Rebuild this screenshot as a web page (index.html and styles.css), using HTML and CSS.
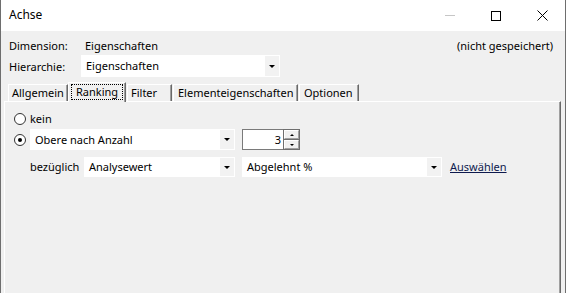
FILE: index.html
```html
<!DOCTYPE html>
<html lang="de">
<head>
<meta charset="utf-8">
<title>Achse</title>
<link rel="stylesheet" href="styles.css">
</head>
<body>
<div class="window">
  <div class="titlebar">
    <div class="title">Achse</div>
    <div class="tb-btn tb-min"><span class="min-line"></span></div>
    <div class="tb-btn"><span class="max-box"></span></div>
    <div class="tb-btn">
      <svg width="11" height="11" viewBox="0 0 11 11"><path d="M0.5 0.5 L10.5 10.5 M10.5 0.5 L0.5 10.5" stroke="#000" stroke-width="1" fill="none"/></svg>
    </div>
  </div>
  <div class="body">
    <div class="info-row">
      <span class="lbl">Dimension:</span>
      <span class="val">Eigenschaften</span>
      <span class="status">(nicht gespeichert)</span>
    </div>
    <div class="hier-row">
      <span class="lbl2">Hierarchie:</span>
      <div class="combo combo-hier"><span class="ctext">Eigenschaften</span><span class="carrow"><i class="tri-down"></i></span></div>
    </div>
    <div class="tabs">
      <div class="tab tab-allg">Allgemein</div>
      <div class="tab tab-active"><span class="focus">Ranking</span></div>
      <div class="tab tab-filter">Filter</div>
      <div class="tab tab-elem">Elementeigenschaften</div>
      <div class="tab tab-opt">Optionen</div>
    </div>
    <div class="panel">
      <div class="prow prow1">
        <span class="radio"></span><span class="rlabel">kein</span>
      </div>
      <div class="prow prow2">
        <span class="radio checked"><i class="dot"></i></span>
        <div class="combo combo-obere"><span class="ctext">Obere nach Anzahl</span><span class="carrow"><i class="tri-down"></i></span></div>
        <div class="spin">
          <span class="spin-val">3</span>
          <div class="spin-btns">
            <span class="sbtn"><i class="tri-up-s"></i></span>
            <span class="sbtn"><i class="tri-down-s"></i></span>
          </div>
        </div>
      </div>
      <div class="prow prow3">
        <span class="bez">bezüglich</span>
        <div class="combo combo-ana"><span class="ctext">Analysewert</span><span class="carrow"><i class="tri-down"></i></span></div>
        <div class="combo combo-abg"><span class="ctext">Abgelehnt %</span><span class="carrow"><i class="tri-down"></i></span></div>
        <a class="link" href="#">Auswählen</a>
      </div>
    </div>
  </div>
</div>
</body>
</html>
```

FILE: styles.css
```css
* { box-sizing: border-box; }
html, body { margin: 0; padding: 0; }
body {
  width: 566px;
  height: 293px;
  overflow: hidden;
  background: #f0f0f0;
  font-family: "Noto Sans", "Liberation Sans", sans-serif;
  font-size: 11px;
  color: #000;
}
.window {
  width: 566px;
  height: 293px;
  border-left: 1px solid #6e6e6e;
  border-right: 1px solid #6e6e6e;
  background: #f0f0f0;
  display: flex;
  flex-direction: column;
  overflow: hidden;
}
.titlebar {
  height: 31px;
  background: #fff;
  display: flex;
  align-items: center;
  flex: none;
}
.title {
  flex: 1;
  padding-left: 8px;
  font-size: 12px;
  line-height: 16px;
  padding-bottom: 1px;
}
.tb-btn {
  width: 46px;
  height: 31px;
  display: flex;
  align-items: center;
  justify-content: center;
}
.min-line {
  display: block;
  width: 10px;
  height: 1px;
  background: #c6c6c6;
}
.max-box {
  display: block;
  width: 10px;
  height: 10px;
  border: 1px solid #000;
}
.body {
  flex: 1;
  display: flex;
  flex-direction: column;
}
.info-row {
  display: flex;
  align-items: center;
  height: 16px;
  margin-top: 7px;
  padding-left: 8px;
  padding-right: 12px;
  line-height: 16px;
}
.lbl { width: 76px; }
.val { flex: 1; }
.hier-row {
  display: flex;
  align-items: center;
  margin-top: 1px;
  padding-left: 8px;
}
.lbl2 { width: 72px; }
.combo {
  background: #fff;
  display: flex;
  align-items: center;
  height: 21px;
}
.combo-hier { width: 199px; height: 22px; }
.ctext {
  flex: 1;
  padding-left: 5px;
  white-space: nowrap;
  line-height: 16px;
}
.carrow {
  width: 16px;
  height: 100%;
  background: #f2f2f2;
  border: 1px solid #fff;
  display: flex;
  align-items: center;
  justify-content: center;
}
.tri-down {
  display: block;
  width: 0;
  height: 0;
  border-left: 3px solid transparent;
  border-right: 3px solid transparent;
  border-top: 3px solid #000;
}
.tabs {
  display: flex;
  align-items: flex-end;
  margin-top: 5px;
  padding-left: 7px;
  height: 20px;
  position: relative;
  z-index: 1;
}
.tab {
  height: 17px;
  margin-bottom: 1px;
  border-top: 1px solid #fff;
  border-left: 1px solid #fff;
  border-right: 1px solid #696969;
  box-shadow: inset -1px 0 0 #a0a0a0;
  line-height: 15px;
  white-space: nowrap;
  padding-left: 3px;
  margin-right: 1px;
}
.tab-allg { width: 60px; margin-right: 0; }
.tab-filter { width: 45px; }
.tab-elem { width: 125px; padding-left: 4px; }
.tab-opt { width: 60px; padding-left: 4px; }
.tab-active {
  width: 58px;
  height: 20px;
  margin-bottom: 0;
  margin-right: 1px;
  padding: 1px 2px 0 2px;
  background: #f0f0f0;
  text-align: center;
}
.focus {
  display: block;
  border: 1px dotted #000;
  line-height: 14px;
}
.panel {
  flex: 1;
  margin-left: 3px;
  width: 557px;
  border-top: 1px solid #fff;
  border-left: 1px solid #fff;
  border-right: 1px solid #696969;
  box-shadow: inset -1px 0 0 #a0a0a0;
  padding: 9px 0 0 9px;
  margin-top: -1px;
}
.prow {
  display: flex;
  align-items: center;
}
.prow1 { height: 16px; }
.prow2 { margin-top: 2px; height: 21px; }
.prow3 { margin-top: 7px; height: 20px; }
.radio {
  width: 12px;
  height: 12px;
  border: 1px solid #333;
  border-radius: 50%;
  background: #fff;
  display: flex;
  align-items: center;
  justify-content: center;
  flex: none;
}
.dot {
  display: block;
  width: 4px;
  height: 4px;
  border-radius: 50%;
  background: #000;
}
.rlabel { margin-left: 4px; line-height: 16px; }
.combo-obere { width: 205px; margin-left: 4px; }
.spin {
  width: 58px;
  height: 21px;
  margin-left: 7px;
  border: 1px solid #7a7a7a;
  background: #fff;
  display: flex;
  align-items: center;
}
.spin-val {
  flex: 1;
  text-align: right;
  padding-right: 2px;
  line-height: 16px;
}
.spin-btns {
  width: 17px;
  height: 21px;
  margin: -1px -1px -1px 0;
  display: flex;
  flex-direction: column;
  background: #6e6e6e;
  padding: 1px;
  gap: 1px;
}
.sbtn {
  flex: 1;
  background: #f0f0f0;
  border-top: 1px solid #fff;
  border-left: 1px solid #fff;
  border-right: 1px solid #a0a0a0;
  border-bottom: 1px solid #a0a0a0;
  display: flex;
  align-items: center;
  justify-content: center;
}
.tri-up-s {
  display: block;
  width: 0; height: 0;
  border-left: 2px solid transparent;
  border-right: 2px solid transparent;
  border-bottom: 2px solid #000;
}
.tri-down-s {
  display: block;
  width: 0; height: 0;
  border-left: 2px solid transparent;
  border-right: 2px solid transparent;
  border-top: 2px solid #000;
}
.bez {
  margin-left: 16px;
  width: 54px;
  line-height: 16px;
}
.combo-ana { width: 151px; height: 20px; }
.combo-abg { width: 200px; height: 20px; margin-left: 7px; }
.link {
  margin-left: 8px;
  color: #0e1a4e;
  text-decoration: underline;
  line-height: 16px;
}
```
